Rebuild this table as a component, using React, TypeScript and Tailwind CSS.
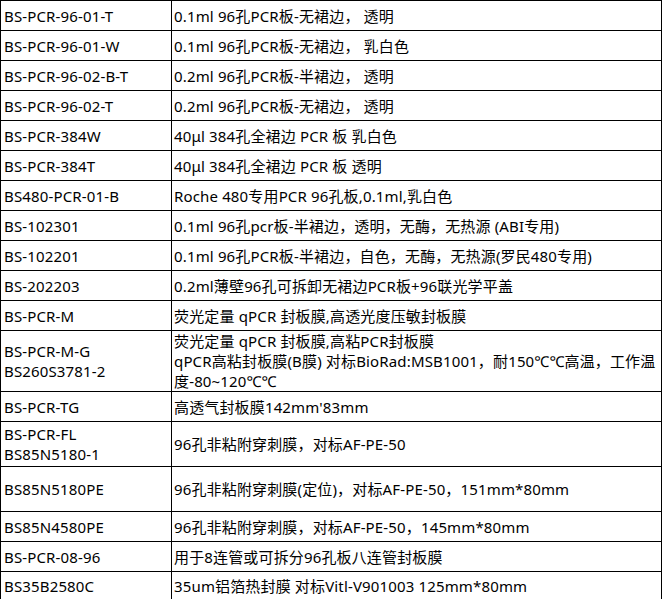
const rows: { code: string[]; desc: string[]; h: string }[] = [
  { code: ["BS-PCR-96-01-T"], desc: ["0.1ml 96孔PCR板-无裙边， 透明"], h: "h-[30px]" },
  { code: ["BS-PCR-96-01-W"], desc: ["0.1ml 96孔PCR板-无裙边， 乳白色"], h: "h-[30px]" },
  { code: ["BS-PCR-96-02-B-T"], desc: ["0.2ml 96孔PCR板-半裙边， 透明"], h: "h-[30px]" },
  { code: ["BS-PCR-96-02-T"], desc: ["0.2ml 96孔PCR板-无裙边， 透明"], h: "h-[30px]" },
  { code: ["BS-PCR-384W"], desc: ["40μl 384孔全裙边 PCR 板 乳白色"], h: "h-[30px]" },
  { code: ["BS-PCR-384T"], desc: ["40μl 384孔全裙边 PCR 板 透明"], h: "h-[30px]" },
  { code: ["BS480-PCR-01-B"], desc: ["Roche 480专用PCR 96孔板,0.1ml,乳白色"], h: "h-[30px]" },
  { code: ["BS-102301"], desc: ["0.1ml 96孔pcr板-半裙边，透明，无酶，无热源 (ABI专用)"], h: "h-[30px]" },
  { code: ["BS-102201"], desc: ["0.1ml 96孔PCR板-半裙边，自色，无酶，无热源(罗民480专用)"], h: "h-[30px]" },
  { code: ["BS-202203"], desc: ["0.2ml薄壁96孔可拆卸无裙边PCR板+96联光学平盖"], h: "h-[30px]" },
  { code: ["BS-PCR-M"], desc: ["荧光定量 qPCR 封板膜,高透光度压敏封板膜"], h: "h-[30px]" },
  {
    code: ["BS-PCR-M-G", "BS260S3781-2"],
    desc: [
      "荧光定量 qPCR 封板膜,高粘PCR封板膜",
      "qPCR高粘封板膜(B膜) 对标BioRad:MSB1001，耐150℃℃高温，工作温度-80~120℃℃",
    ],
    h: "h-[60px]",
  },
  { code: ["BS-PCR-TG"], desc: ["高透气封板膜142mm'83mm"], h: "h-[30px]" },
  { code: ["BS-PCR-FL", "BS85N5180-1"], desc: ["96孔非粘附穿刺膜，对标AF-PE-50"], h: "h-[45px]" },
  { code: ["BS85N5180PE"], desc: ["96孔非粘附穿刺膜(定位)，对标AF-PE-50，151mm*80mm"], h: "h-[45px]" },
  { code: ["BS85N4580PE"], desc: ["96孔非粘附穿刺膜，对标AF-PE-50，145mm*80mm"], h: "h-[30px]" },
  { code: ["BS-PCR-08-96"], desc: ["用于8连管或可拆分96孔板八连管封板膜"], h: "h-[30px]" },
  { code: ["BS35B2580C"], desc: ["35um铝箔热封膜 对标Vitl-V901003 125mm*80mm"], h: "h-[29px]" },
];

export default function App() {
  return (
    <div className="w-[663px] h-[599px] bg-white overflow-hidden font-['Noto_Sans','Noto_Sans_CJK_SC',sans-serif] text-[15px] tracking-[0.15px] leading-[20px] text-black">
      <table className="w-[662px] table-fixed border-collapse border border-black">
        <colgroup>
          <col className="w-[171px]" />
          <col />
        </colgroup>
        <tbody>
          {rows.map((r, i) => (
            <tr key={i} className={r.h}>
              <td className="border border-black px-[3px] py-0 align-middle">
                {r.code.map((c) => (
                  <div key={c}>{c}</div>
                ))}
              </td>
              <td className="border border-black px-[2px] py-0 align-middle">
                {r.desc.map((d) => (
                  <div key={d}>{d}</div>
                ))}
              </td>
            </tr>
          ))}
        </tbody>
      </table>
    </div>
  );
}
